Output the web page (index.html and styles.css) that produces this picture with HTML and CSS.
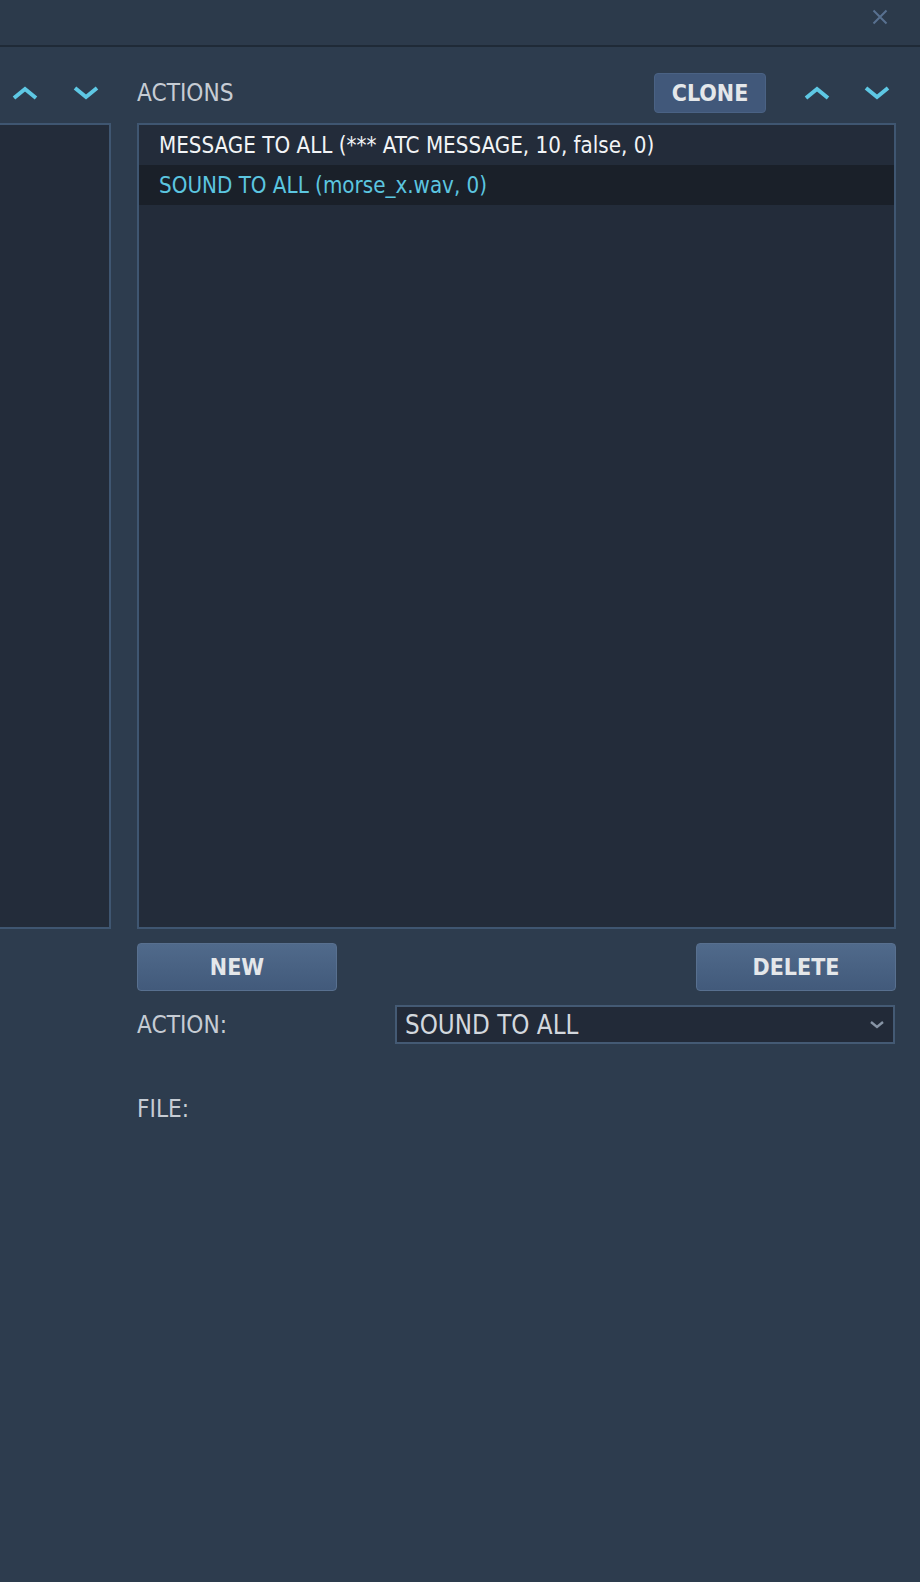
FILE: index.html
```html
<!DOCTYPE html>
<html lang="en">
<head>
<meta charset="utf-8">
<title>Actions</title>
<link rel="stylesheet" href="styles.css">
</head>
<body>
<div class="header">
  <span class="close" aria-label="Close">
    <svg width="16" height="16" viewBox="0 0 16 16"><path d="M1.5 1.5 L14.5 14.5 M14.5 1.5 L1.5 14.5" stroke="#587190" stroke-width="2" fill="none"/></svg>
  </span>
</div>
<div class="main">
  <div class="col-left">
    <div class="col-head left-head">
      <span class="arrow up"><svg width="26" height="14" viewBox="0 0 26 14"><polyline points="2,12 13,3 24,12" fill="none" stroke="#5ec8e4" stroke-width="4"/></svg></span>
      <span class="arrow down"><svg width="26" height="14" viewBox="0 0 26 14"><polyline points="2,2 13,11 24,2" fill="none" stroke="#5ec8e4" stroke-width="4"/></svg></span>
    </div>
    <div class="listbox listbox-left"></div>
  </div>
  <div class="col-right">
    <div class="col-head">
      <span class="title">ACTIONS</span>
      <button class="btn btn-clone">CLONE</button>
      <span class="arrow up r-up"><svg width="26" height="14" viewBox="0 0 26 14"><polyline points="2,12 13,3 24,12" fill="none" stroke="#5ec8e4" stroke-width="4"/></svg></span>
      <span class="arrow down r-down"><svg width="26" height="14" viewBox="0 0 26 14"><polyline points="2,2 13,11 24,2" fill="none" stroke="#5ec8e4" stroke-width="4"/></svg></span>
    </div>
    <div class="listbox">
      <div class="row">MESSAGE TO ALL (*** ATC MESSAGE, 10, false, 0)</div>
      <div class="row selected">SOUND TO ALL (morse_x.wav, 0)</div>
    </div>
    <div class="btn-row">
      <button class="btn btn-big">NEW</button>
      <button class="btn btn-big">DELETE</button>
    </div>
    <div class="field">
      <span class="label">ACTION:</span>
      <div class="select">
        <span class="select-value">SOUND TO ALL</span>
        <svg class="select-caret" width="14" height="8" viewBox="0 0 14 8"><polyline points="1,1 7,6 13,1" fill="none" stroke="#8794a5" stroke-width="2.4"/></svg>
      </div>
    </div>
    <div class="field field-file">
      <span class="label">FILE:</span>
    </div>
  </div>
</div>
</body>
</html>
```

FILE: styles.css
```css
html, body {
  margin: 0;
  padding: 0;
}
body {
  width: 920px;
  height: 1582px;
  overflow: hidden;
  background: #2d3c4e;
  font-family: "DejaVu Sans Condensed", "DejaVu Sans", sans-serif;
  color: #c6ccd4;
}
.header {
  height: 45px;
  border-bottom: 2px solid #1f2a37;
  background: #2c3a4b;
  display: flex;
  justify-content: flex-end;
  align-items: flex-start;
  padding-right: 32px;
  box-sizing: content-box;
}
.close {
  margin-top: 9px;
  display: block;
  width: 16px;
  height: 16px;
}
.close svg { display: block; }

.main {
  display: flex;
  gap: 26px;
  padding-top: 26px;
}
.col-left {
  width: 111px;
  flex: none;
}
.col-right {
  width: 759px;
  flex: none;
}
.col-head {
  height: 40px;
  margin-bottom: 10px;
  display: flex;
  align-items: center;
}
.left-head {
  padding-left: 12px;
}
.left-head .down {
  margin-left: 35px;
}
.arrow {
  display: block;
  width: 26px;
  height: 14px;
}
.arrow svg { display: block; }

.title {
  font-size: 24.2px;
  color: #c6ccd4;
}
.btn {
  font-family: "DejaVu Sans Condensed", "DejaVu Sans", sans-serif;
  font-weight: bold;
  font-size: 23px;
  color: #e4e7ea;
  border: 1px solid #51698a;
  border-radius: 4px;
  padding: 0;
  cursor: pointer;
}
.btn-clone {
  margin-left: auto;
  width: 112px;
  height: 40px;
  background: #41587a;
  border-color: #4a6284;
}
.r-up {
  margin-left: 38px;
}
.r-down {
  margin-left: 34px;
  margin-right: 6px;
}

.listbox {
  height: 806px;
  box-sizing: border-box;
  background: #232c3a;
  border: 2px solid #3f5671;
}
.listbox-left {
  border-left: none;
}
.row {
  height: 40px;
  line-height: 40px;
  padding-left: 20px;
  font-size: 22.2px;
  color: #f2f4f6;
  white-space: nowrap;
}
.row.selected {
  background: #1a2029;
  color: #5cc6e0;
}

.btn-row {
  display: flex;
  justify-content: space-between;
  margin-top: 14px;
}
.btn-big {
  width: 200px;
  height: 48px;
  background: linear-gradient(#506a8b, #425a7b);
  border-color: #58708f;
}

.field {
  display: flex;
  align-items: center;
  height: 39px;
  margin-top: 14px;
}
.label {
  width: 258px;
  flex: none;
  font-size: 24.2px;
  color: #c6ccd4;
}
.select {
  width: 500px;
  height: 39px;
  box-sizing: border-box;
  background: #222a38;
  border: 2px solid #445a74;
  display: flex;
  align-items: center;
  padding-left: 8px;
  padding-right: 9px;
}
.select-value {
  flex: 1;
  font-size: 25.7px;
  color: #d3d8de;
}
.select-caret {
  display: block;
}
.field-file {
  margin-top: 45px;
}
```
